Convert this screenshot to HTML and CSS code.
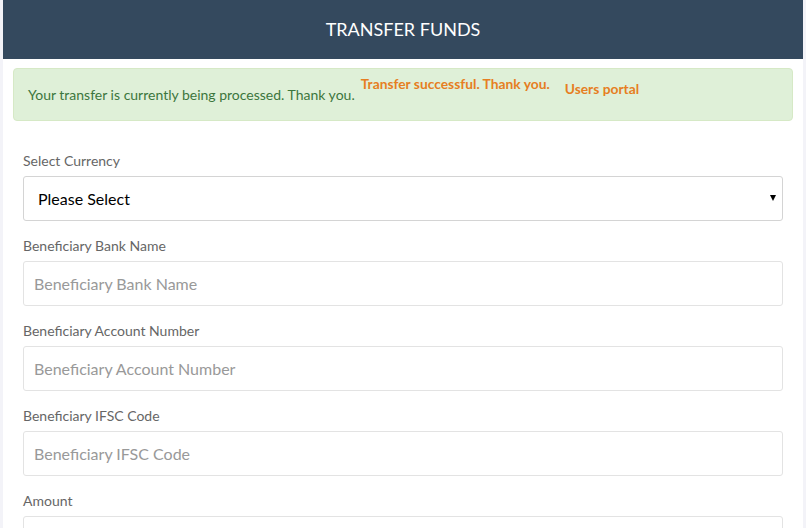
FILE: index.html
```html
<!DOCTYPE html>
<html>
<head>
<meta charset="utf-8">
<link rel="stylesheet" href="styles.css">
</head>
<body>
<div class="panel">
  <div class="panel-head">TRANSFER FUNDS</div>
  <div class="panel-body">
    <div class="alert">
      <span class="alert-main">Your transfer is currently being processed. Thank you.</span>
      <span class="alert-note">Transfer successful. Thank you.</span>
      <span class="alert-link">Users portal</span>
    </div>
    <form class="form">
      <div class="group">
        <label class="label">Select Currency</label>
        <div class="select-wrap">
          <select class="select"><option>Please Select</option></select>
        </div>
      </div>
      <div class="group">
        <label class="label">Beneficiary Bank Name</label>
        <input class="input" placeholder="Beneficiary Bank Name">
      </div>
      <div class="group">
        <label class="label">Beneficiary Account Number</label>
        <input class="input" placeholder="Beneficiary Account Number">
      </div>
      <div class="group">
        <label class="label">Beneficiary IFSC Code</label>
        <input class="input" placeholder="Beneficiary IFSC Code">
      </div>
      <div class="group">
        <label class="label">Amount</label>
        <input class="input" placeholder="Amount">
      </div>
    </form>
  </div>
</div>
</body>
</html>
```
FILE: styles.css
```css
html, body {
  margin: 0;
  padding: 0;
  background: #f3f3f8;
  font-family: Lato, "Liberation Sans", sans-serif;
}
.panel {
  margin: 0 3px;
  background: #fff;
  height: 528px;
  overflow: hidden;
}
.panel-head {
  height: 59px;
  background: #34495e;
  color: #fff;
  font-size: 18px;
  display: flex;
  align-items: center;
  justify-content: center;
  padding-bottom: 2px;
  box-sizing: border-box;
}
.panel-body {
  padding: 9px 10px 0;
}
.alert {
  height: 51px;
  background: #dff0d8;
  border: 1px solid #d6e9c6;
  border-radius: 4px;
  display: flex;
  align-items: flex-start;
}
.alert-main {
  color: #3c763d;
  font-size: 14px;
  line-height: 20px;
  margin: 16px 0 0 14px;
}
.alert-note {
  color: #e67e22;
  font-size: 13.8px;
  font-weight: bold;
  line-height: 16px;
  margin: 7px 0 0 6px;
}
.alert-link {
  color: #e67e22;
  font-size: 13.8px;
  font-weight: bold;
  line-height: 16px;
  margin: 12px 0 0 15px;
}
.form {
  padding: 30px 10px 0;
}
.group {
  margin-bottom: 15px;
}
.label {
  display: block;
  color: #666;
  font-size: 14px;
  line-height: 20px;
  margin-bottom: 5px;
}
.select-wrap {
  position: relative;
}
.select-wrap::after {
  content: "";
  position: absolute;
  right: 7px;
  top: 19px;
  border-left: 3.5px solid transparent;
  border-right: 3.5px solid transparent;
  border-top: 6px solid #000;
  pointer-events: none;
}
.select {
  appearance: none;
  -webkit-appearance: none;
  display: block;
  width: 100%;
  height: 45px;
  box-sizing: border-box;
  border: 1px solid #d4d4d4;
  border-radius: 3px;
  background: #fff;
  padding: 0 0 0 14px;
  font-family: Lato, "Liberation Sans", sans-serif;
  font-size: 16px;
  color: #000;
  outline: none;
}
.input {
  display: block;
  width: 100%;
  height: 45px;
  box-sizing: border-box;
  border: 1px solid #e3e3e3;
  border-radius: 3px;
  background: #fff;
  padding: 0 10px;
  font-family: Lato, "Liberation Sans", sans-serif;
  font-size: 16px;
  color: #333;
  outline: none;
}
.input::placeholder {
  color: #999;
}
```
